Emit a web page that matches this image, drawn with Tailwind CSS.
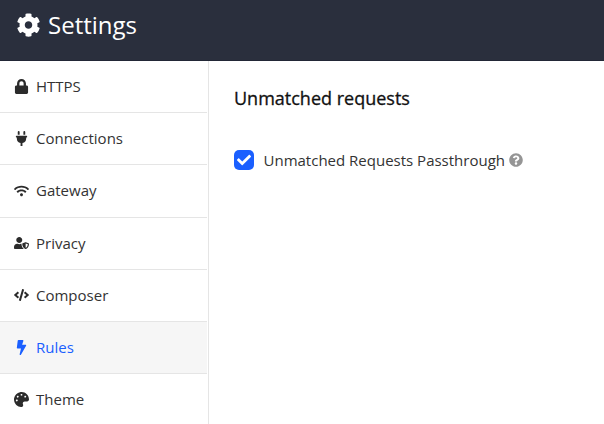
<!DOCTYPE html>
<html lang="en">
<head>
<meta charset="utf-8">
<title>Settings</title>
<script src="https://cdn.jsdelivr.net/npm/@tailwindcss/browser@4"></script>
</head>
<body class="w-[604px] h-[424px] overflow-hidden flex flex-col bg-white text-[#333] font-['Open_Sans',sans-serif]">
<header class="h-[61px] shrink-0 bg-[#2a2f3d] border-b border-[#222736] text-white flex items-start gap-2 pl-4 pt-[7px]">
  <svg class="w-[25px] h-6 -mr-px mt-[6px]" viewBox="0 0 512 512" fill="currentColor"><path d="M487.400 315.700l-42.600-24.600c4.300-23.200 4.300-47 0-70.200l42.600-24.600c4.900-2.800 7.100-8.600 5.500-14-11.100-35.600-30-67.800-54.700-94.600-3.800-4.100-10-5.100-14.800-2.300L380.800 110c-17.900-15.400-38.500-27.300-60.800-35.100V25.800c0-5.600-3.900-10.500-9.400-11.700-36.700-8.200-74.300-7.800-109.200 0-5.500 1.200-9.400 6.100-9.400 11.700V75c-22.200 7.900-42.800 19.800-60.800 35.100L88.700 85.500c-4.900-2.800-11-1.900-14.800 2.300-24.700 26.700-43.600 58.900-54.700 94.600-1.700 5.400.6 11.200 5.500 14L67.300 221c-4.300 23.200-4.300 47 0 70.200l-42.600 24.600c-4.900 2.800-7.100 8.600-5.500 14 11.100 35.600 30 67.800 54.700 94.600 3.800 4.100 10 5.100 14.800 2.300l42.600-24.600c17.900 15.400 38.500 27.300 60.800 35.100v49.200c0 5.600 3.900 10.500 9.400 11.700 36.700 8.200 74.300 7.800 109.200 0 5.500-1.200 9.400-6.100 9.400-11.700v-49.200c22.200-7.900 42.800-19.800 60.800-35.100l42.600 24.600c4.900 2.800 11 1.900 14.800-2.300 24.700-26.700 43.600-58.900 54.700-94.600 1.500-5.500-.7-11.300-5.600-14.100zM256 336c-44.100 0-80-35.900-80-80s35.900-80 80-80 80 35.900 80 80-35.900 80-80 80z"/></svg>
  <h1 class="text-2xl leading-9">Settings</h1>
</header>
<div class="flex flex-1 min-h-0">
  <nav class="w-[209px] shrink-0 border-r border-[#e5e5e5] pr-px text-[15px] leading-[22px]">
    <a class="h-[52px] border-b border-[#e5e5e5] flex items-center gap-[7px] pl-[14px] pb-[2px]"><svg class="mt-[2px] w-[15px] h-[15px] text-[#2b2b2b]" viewBox="-32 0 512 512" fill="currentColor"><path d="M400 224h-24v-72C376 68.200 307.800 0 224 0S72 68.200 72 152v72H48c-26.500 0-48 21.500-48 48v192c0 26.500 21.500 48 48 48h352c26.500 0 48-21.500 48-48V272c0-26.500-21.500-48-48-48zm-104 0H152v-72c0-39.700 32.300-72 72-72s72 32.300 72 72v72z"/></svg>HTTPS</a>
    <a class="h-[52px] border-b border-[#e5e5e5] flex items-center gap-[7px] pl-[14px] pb-[2px]"><svg class="mt-[2px] w-[15px] h-[15px] text-[#2b2b2b]" viewBox="-64 0 512 512" fill="currentColor"><path d="M320 32a32 32 0 0 0-64 0v96h64zm48 128H16A16 16 0 0 0 0 176v32a16 16 0 0 0 16 16h16v32a160.070 160.070 0 0 0 128 156.800V512h64v-99.200A160.070 160.070 0 0 0 352 256v-32h16a16 16 0 0 0 16-16v-32a16 16 0 0 0-16-16zM128 32a32 32 0 0 0-64 0v96h64z"/></svg>Connections</a>
    <a class="h-[53px] border-b border-[#e5e5e5] flex items-center gap-[7px] pl-[14px] pb-[2px]"><svg class="mt-[1px] w-[15px] h-[12px] text-[#2b2b2b]" viewBox="0 0 640 512" fill="currentColor"><path d="M634.910 154.880C457.740-8.990 182.190-8.930 5.090 154.880c-6.660 6.160-6.790 16.590-.35 22.980l34.240 33.970c6.140 6.100 16.020 6.230 22.400.38 145.920-133.680 371.300-133.710 517.250 0 6.380 5.850 16.260 5.710 22.400-.38l34.240-33.970c6.430-6.390 6.300-16.820-.36-22.980zM320 352c-35.350 0-64 28.650-64 64s28.650 64 64 64 64-28.650 64-64-28.650-64-64-64zm202.670-83.590c-115.260-101.930-290.210-101.820-405.340 0-6.900 6.100-7.120 16.690-.57 23.150l34.440 33.990c6 5.920 15.660 6.320 22.050.8 83.950-72.570 209.740-72.410 293.490 0 6.390 5.520 16.050 5.130 22.050-.8l34.440-33.990c6.560-6.460 6.330-17.060-.56-23.150z"/></svg>Gateway</a>
    <a class="h-[52px] border-b border-[#e5e5e5] flex items-center gap-[7px] pl-[14px] pb-[2px]"><svg class="mt-[1px] w-[15px] h-[12px] text-[#2b2b2b]" viewBox="0 0 640 512" fill="currentColor"><path d="M622.300 271.100l-115.200-45c-4.100-1.600-12.600-3.700-22.200 0l-115.200 45c-10.700 4.200-17.700 14-17.700 24.900 0 111.600 68.700 188.800 132.900 213.900 9.600 3.700 18 1.600 22.200 0C558.400 489.900 640 420.500 640 296c0-10.900-7-20.700-17.700-24.900zM496 462.400V273.300l95.500 37.300c-5.600 87.100-60.900 135.400-95.500 151.800zM224 256c70.700 0 128-57.300 128-128S294.700 0 224 0 96 57.300 96 128s57.300 128 128 128zm96 40c0-2.500.8-4.800 1.100-7.200-2.500-.1-4.900-.8-7.500-.8h-16.700c-22.200 10.200-46.900 16-72.900 16s-50.600-5.800-72.900-16h-16.700C60.200 288 0 348.200 0 422.400V464c0 26.500 21.500 48 48 48h352c6.800 0 13.300-1.500 19.200-4-54-42.900-99.200-116.700-99.200-212z"/></svg>Privacy</a>
    <a class="h-[52px] border-b border-[#e5e5e5] flex items-center gap-[7px] pl-[14px] pb-[2px]"><svg class="mt-[1px] w-[15px] h-[12px] text-[#2b2b2b]" viewBox="0 0 640 512" fill="currentColor"><path d="M278.900 511.500l-61-17.700c-6.400-1.800-10-8.500-8.200-14.900L346.200 8.700c1.800-6.400 8.500-10 14.900-8.200l61 17.700c6.400 1.800 10 8.500 8.200 14.900L293.800 503.300c-1.900 6.400-8.500 10.100-14.900 8.200zm-114-112.200l43.500-46.400c4.600-4.900 4.300-12.700-.8-17.200L117 256l90.600-79.700c5.100-4.500 5.500-12.300.8-17.200l-43.500-46.400c-4.500-4.800-12.100-5.100-17-.5L3.800 247.200c-5.100 4.700-5.100 12.800 0 17.500l144.100 135.100c4.900 4.600 12.500 4.400 17-.5zm327.200.6l144.100-135.100c5.100-4.700 5.100-12.800 0-17.500L492.100 112.100c-4.800-4.500-12.400-4.300-17 .5L431.600 159c-4.600 4.900-4.300 12.700.8 17.200L523 256l-90.600 79.700c-5.100 4.500-5.500 12.300-.8 17.200l43.500 46.400c4.500 4.900 12.100 5.100 17 .6z"/></svg>Composer</a>
    <a class="h-[52px] border-b border-[#e5e5e5] bg-[#f6f6f6] text-[#1a5fff] flex items-center gap-[7px] pl-[14px] pb-[2px]"><svg class="mt-[2px] w-[15px] h-[15px]" viewBox="-96 0 512 512" fill="currentColor"><path d="M296 160H180.600l42.600-129.800C227.200 15 215.700 0 200 0H56C44 0 33.800 8.900 32.200 20.800l-32 240C-1.700 275.200 9.500 288 24 288h118.700L96.600 482.500c-3.600 15.200 8 29.500 23.300 29.500 8.400 0 16.400-4.400 20.800-12l176-304c9.300-15.900-2.200-36-20.700-36z"/></svg>Rules</a>
    <a class="h-[52px] flex items-center gap-[7px] pl-[14px] pb-[2px]"><svg class="mt-[1px] w-[15px] h-[15px] text-[#2b2b2b]" viewBox="0 0 512 512" fill="currentColor"><path d="M204.300 5C104.900 24.400 24.800 104.300 5.200 203.400c-37 187 131.700 326.400 258.800 306.700 41.200-6.400 61.400-54.600 42.500-91.700-23.100-45.400 9.900-98.400 60.900-98.400h79.700c35.800 0 64.800-29.600 64.900-65.300C511.500 97.100 368.100-26.900 204.300 5zM96 320c-17.700 0-32-14.300-32-32s14.300-32 32-32 32 14.300 32 32-14.300 32-32 32zm32-128c-17.700 0-32-14.300-32-32s14.300-32 32-32 32 14.300 32 32-14.300 32-32 32zm128-64c-17.700 0-32-14.300-32-32s14.300-32 32-32 32 14.300 32 32-14.300 32-32 32zm128 64c-17.700 0-32-14.300-32-32s14.300-32 32-32 32 14.300 32 32-14.300 32-32 32z"/></svg>Theme</a>
  </nav>
  <main class="flex-1 pl-[25px] pt-[25px]">
    <h2 class="text-[18px] leading-6 text-[#111] [-webkit-text-stroke:0.3px_#111]">Unmatched requests</h2>
    <div class="mt-[39px] flex items-center text-[15px] leading-[22px]">
      <span class="size-5 rounded-[5px] bg-[#1a5fff] text-white flex items-center justify-center"><svg class="size-[14px]" viewBox="0 0 512 512" fill="currentColor"><path d="M173.900 439.400l-166.400-166.400c-10-10-10-26.200 0-36.200l36.200-36.200c10-10 26.200-10 36.200 0L192 312.700 432.100 72.600c10-10 26.200-10 36.200 0l36.200 36.200c10 10 10 26.200 0 36.200L210.100 439.400c-10 10-26.200 10-36.200 0z"/></svg></span>
      <span class="ml-[9.500px]">Unmatched Requests Passthrough</span>
      <svg class="size-[14px] ml-[3.500px] text-[#959595]" viewBox="0 0 512 512" fill="currentColor"><path d="M504 256c0 137-111 248-248 248S8 393 8 256 119 8 256 8s248 111 248 248zM262.700 90c-54.500 0-89.300 23-116.500 63.800-3.500 5.300-2.400 12.400 2.700 16.300l34.700 26.300c5.200 3.900 12.600 3 16.700-2.100 17.900-22.700 30.100-35.800 57.300-35.800 20.400 0 45.700 13.100 45.700 33 0 15-12.400 22.700-32.500 34C247.100 238.500 216 254.900 216 296v4c0 6.600 5.400 12 12 12h56c6.600 0 12-5.400 12-12v-1.300c0-28.500 83.200-29.600 83.200-106.700 0-58-60.200-102-116.500-102zM256 338c-25.400 0-46 20.600-46 46s20.600 46 46 46 46-20.600 46-46-20.600-46-46-46z"/></svg>
    </div>
  </main>
</div>
</body>
</html>
